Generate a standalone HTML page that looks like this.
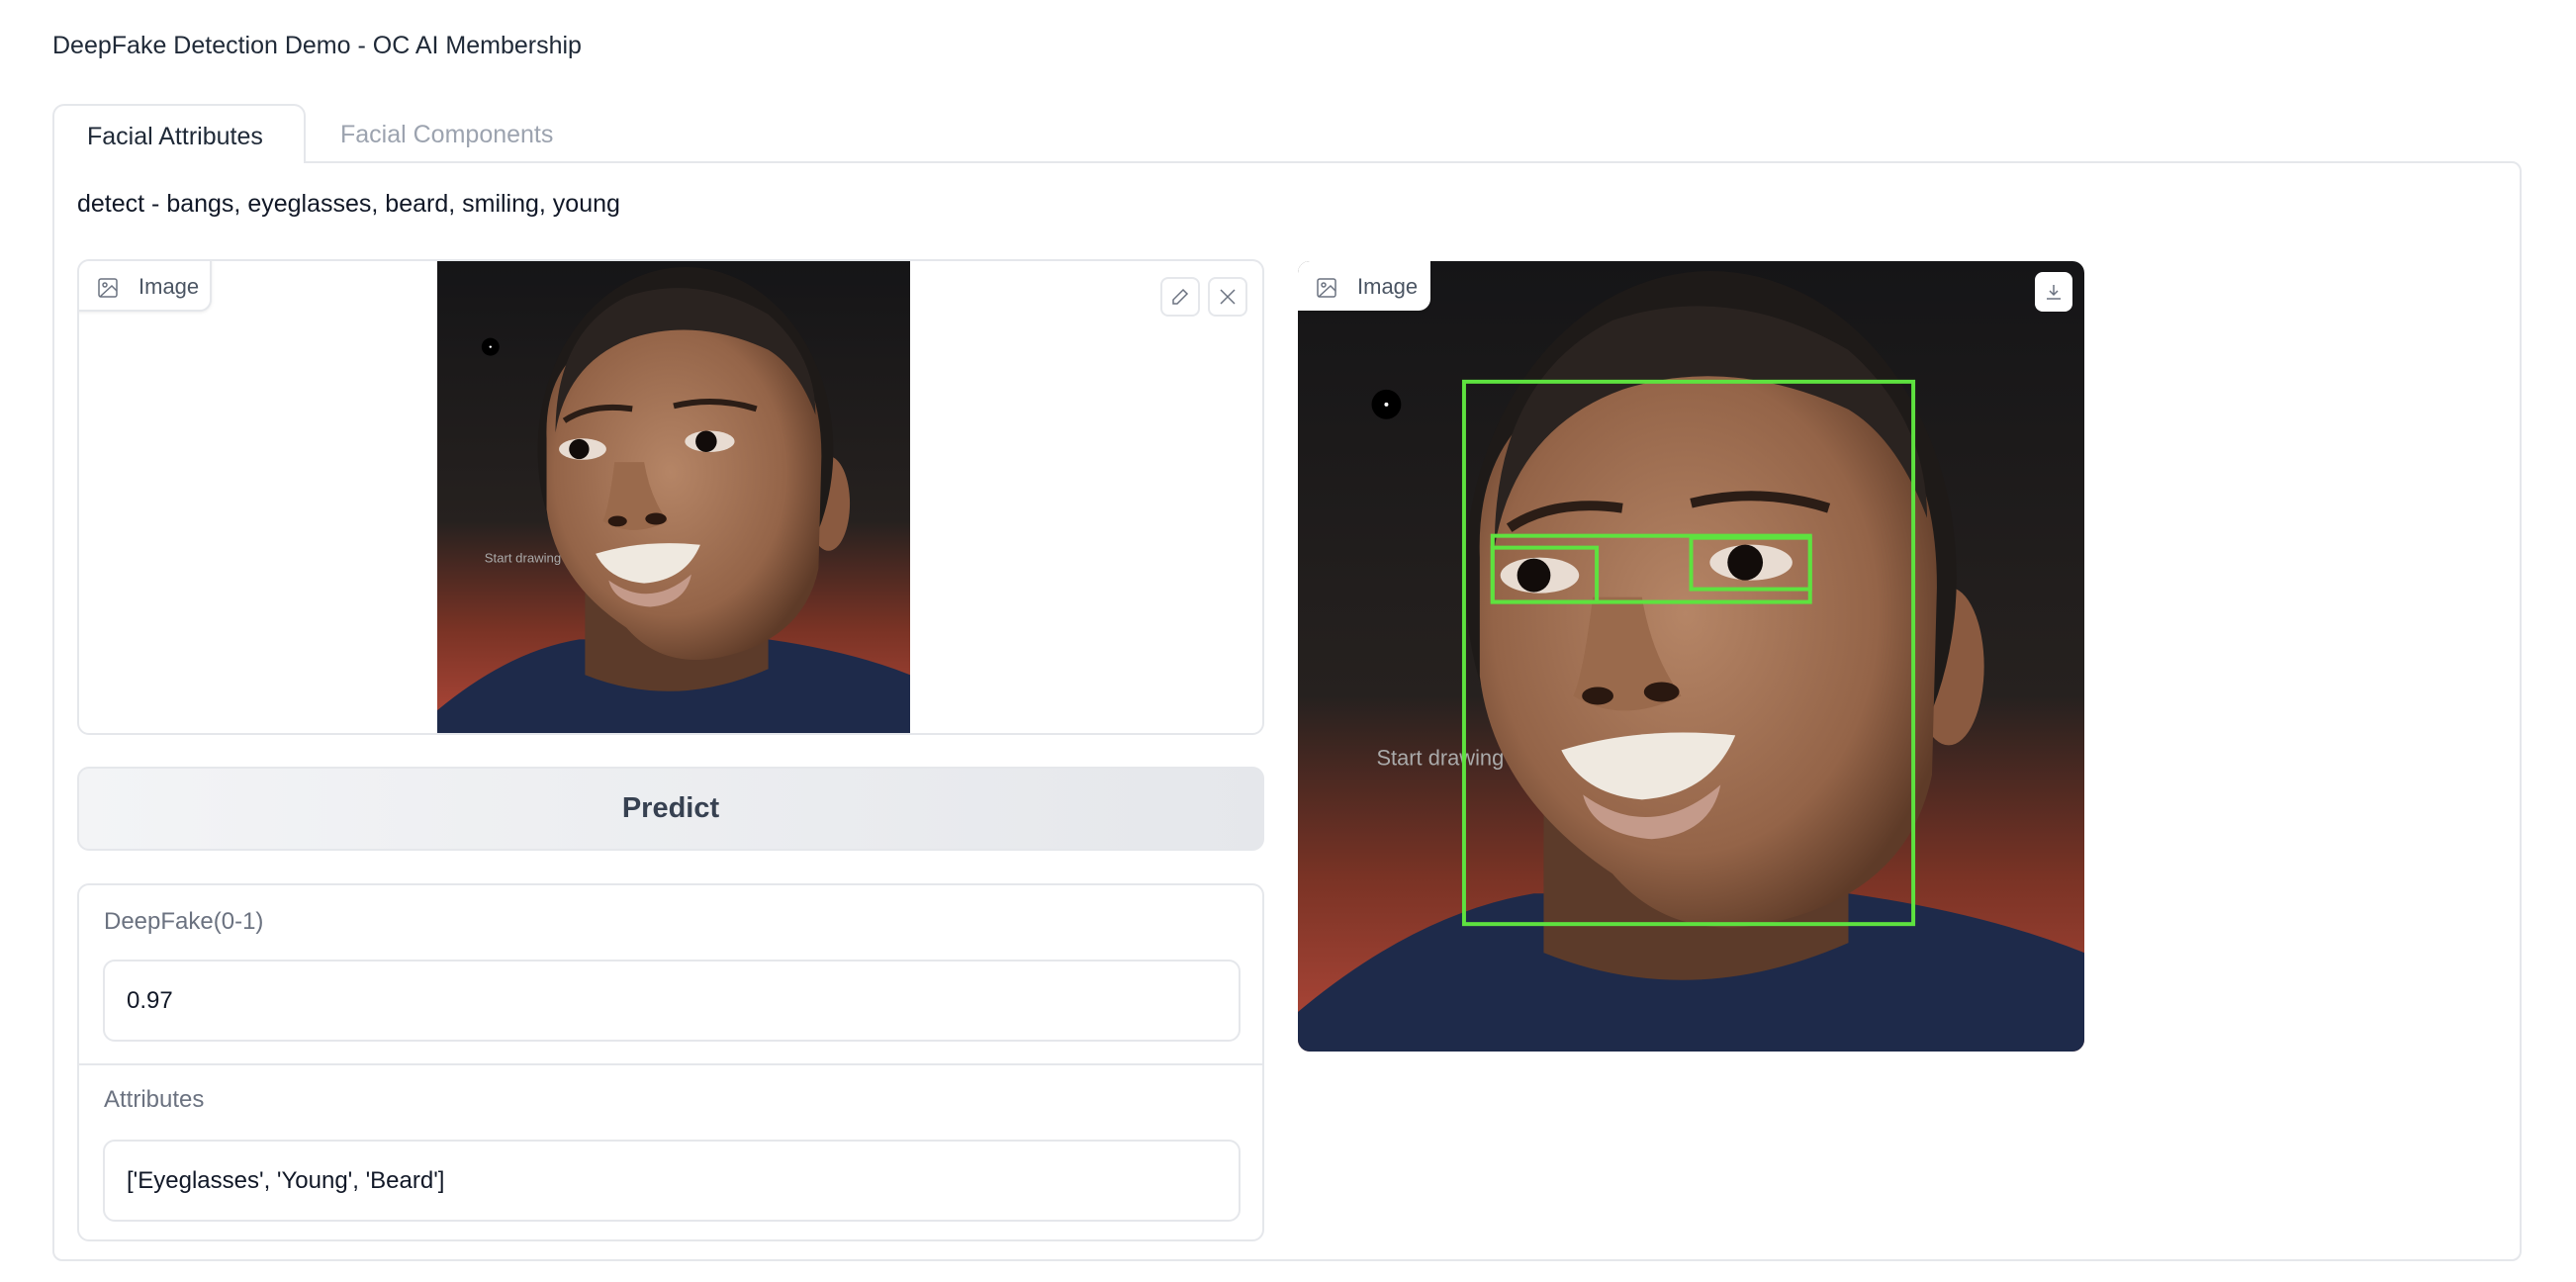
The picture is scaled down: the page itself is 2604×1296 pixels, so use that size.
<!DOCTYPE html>
<html><head><meta charset="utf-8"><style>
*{box-sizing:border-box;margin:0;padding:0}
body{width:2604px;height:1296px;background:#fff;font-family:"Liberation Sans",sans-serif;position:relative;overflow:hidden;color:#1f2937}
.a{position:absolute}
.title{left:53px;top:32px;font-size:25px;color:#1f2937}
.tab{left:53px;top:105px;width:256px;height:60px;border:2px solid #e5e7eb;border-bottom:none;border-radius:12px 12px 0 0;background:#fff;z-index:2;font-size:25px;padding:17px 0 0 33px;color:#1f2937}
.tab2{left:344px;top:122px;font-size:25px;color:#9ca3af}
.panel{left:53px;top:163px;width:2496px;height:1112px;border:2px solid #e5e7eb;border-radius:0 10px 10px 10px}
.detect{left:78px;top:192px;font-size:25px;color:#111827}
.box{border:2px solid #e5e7eb;border-radius:12px;background:#fff}
.lbl{background:#fff;border:2px solid #e5e7eb;border-top:none;border-left:none;border-radius:0 0 12px 0;font-size:22px;color:#4b5563;padding:13px 0 0 60px;box-shadow:0 1px 3px rgba(0,0,0,.08)}
.ic{position:absolute;left:18px;top:16px}
.btn{border:2px solid #e5e7eb;border-radius:8px;background:#fff;display:flex;align-items:center;justify-content:center}
.predict{left:78px;top:775px;width:1200px;height:85px;border-radius:12px;background:linear-gradient(90deg,#f3f4f6,#e5e7eb);border:2px solid #e5e7eb;font-size:29px;font-weight:bold;color:#374151;text-align:center;line-height:81px}
.flbl{font-size:24px;color:#6b7280}
.inp{border:2px solid #e5e7eb;border-radius:12px;background:#fff;font-size:24px;color:#111827;padding:0 0 0 22px;display:flex;align-items:center}
</style></head><body>
<div class="a title">DeepFake Detection Demo - OC AI Membership</div>
<div class="a tab">Facial Attributes</div>
<div class="a tab2">Facial Components</div>
<div class="a panel"></div>
<div class="a detect">detect - bangs, eyeglasses, beard, smiling, young</div>

<svg width="0" height="0" style="position:absolute"><defs>
<linearGradient id="bg" x1="0" y1="0" x2="0" y2="1"><stop offset="0" stop-color="#151517"/><stop offset=".55" stop-color="#26211f"/><stop offset=".78" stop-color="#7a3325"/><stop offset="1" stop-color="#b2483a"/></linearGradient>
<radialGradient id="sk" cx=".45" cy=".45" r=".6"><stop offset="0" stop-color="#b58566"/><stop offset=".7" stop-color="#946448"/><stop offset="1" stop-color="#5e3b28"/></radialGradient>
<g id="face">
<rect width="800" height="800" fill="url(#bg)"/>
<path d="M0 760 Q120 660 240 640 L560 640 Q700 660 800 700 L800 800 L0 800Z" fill="#1e2a4a"/>
<path d="M250 560 L250 700 Q400 760 560 690 L560 560Z" fill="#5c3b2a"/>
<ellipse cx="662" cy="410" rx="36" ry="80" fill="#8a5a40"/>
<ellipse cx="420" cy="320" rx="250" ry="310" fill="#1e1a18"/>
<path d="M185 300 Q180 160 300 120 Q420 70 560 130 Q650 180 650 330 L645 520 Q620 640 480 670 Q380 690 320 620 Q200 540 185 420Z" fill="url(#sk)"/>
<path d="M200 290 Q220 170 330 130 Q440 95 560 150 Q610 180 640 260 Q640 160 560 90 Q440 20 320 60 Q200 120 200 290Z" fill="#2a2320"/>
<path d="M215 270 Q260 240 330 250" stroke="#2b1d16" stroke-width="10" fill="none"/>
<path d="M400 245 Q470 228 540 250" stroke="#2b1d16" stroke-width="10" fill="none"/>
<ellipse cx="246" cy="318" rx="40" ry="18" fill="#e8dcd2"/><circle cx="240" cy="318" r="17" fill="#120c0a"/>
<ellipse cx="461" cy="305" rx="42" ry="18" fill="#e8dcd2"/><circle cx="455" cy="305" r="18" fill="#120c0a"/>
<path d="M300 340 Q290 420 280 440 Q330 470 390 440 Q360 400 350 340Z" fill="#9a6a4c"/>
<ellipse cx="305" cy="440" rx="16" ry="9" fill="#2a1810"/><ellipse cx="370" cy="436" rx="18" ry="10" fill="#2a1810"/>
<path d="M268 495 Q350 470 445 480 Q420 540 350 545 Q290 540 268 495Z" fill="#efe9e0"/>
<path d="M290 540 Q360 590 430 530 Q420 580 360 585 Q300 580 290 540Z" fill="#c49a8a"/>
<text x="80" y="510" font-size="22" fill="#aaa" font-family="Liberation Sans">Start drawing</text>
<circle cx="90" cy="145" r="15" fill="#000"/><circle cx="90" cy="145" r="2" fill="#fff"/>
</g></defs></svg>

<div class="a box" style="left:78px;top:262px;width:1200px;height:481px;overflow:hidden">
<svg class="a" style="left:362px;top:0" width="478" height="478" viewBox="0 0 800 800"><use href="#face"/></svg>
<div class="a lbl" style="left:-2px;top:-2px;width:136px;height:53px;border-left:2px solid #e5e7eb;border-top:2px solid #e5e7eb;border-radius:12px 0 12px 0"><svg class="ic" width="22" height="22" viewBox="0 0 22 22" fill="none" stroke="#6b7280" stroke-width="1.5"><rect x="2" y="2" width="18" height="18" rx="2"/><circle cx="8" cy="8" r="2"/><path d="M20 14l-5-5L3 20"/></svg>Image</div>
<div class="a btn" style="left:1093px;top:16px;width:40px;height:40px"><svg width="20" height="20" viewBox="0 0 20 20" fill="none" stroke="#6b7280" stroke-width="1.5"><path d="M13 3l4 4L7 17H3v-4z"/></svg></div>
<div class="a btn" style="left:1141px;top:16px;width:40px;height:40px"><svg width="18" height="18" viewBox="0 0 18 18" stroke="#6b7280" stroke-width="1.5"><path d="M2 2l14 14M16 2L2 16"/></svg></div>
</div>

<div class="a predict">Predict</div>

<div class="a box" style="left:78px;top:893px;width:1200px;height:362px"></div>
<div class="a flbl" style="left:105px;top:918px">DeepFake(0-1)</div>
<div class="a inp" style="left:104px;top:970px;width:1150px;height:83px">0.97</div>
<div class="a" style="left:80px;top:1075px;width:1196px;height:2px;background:#e5e7eb"></div>
<div class="a flbl" style="left:105px;top:1098px">Attributes</div>
<div class="a inp" style="left:104px;top:1152px;width:1150px;height:83px">['Eyeglasses', 'Young', 'Beard']</div>

<div class="a" style="left:1312px;top:264px;width:795px;height:799px;border-radius:12px;overflow:hidden">
<svg class="a" style="left:0;top:0" width="795" height="799" viewBox="0 0 800 800" preserveAspectRatio="none"><use href="#face"/>
<g fill="none" stroke="#5ee23f" stroke-width="4">
<rect x="169" y="122" width="457" height="549"/>
<rect x="198" y="278" width="323" height="67"/>
<rect x="198" y="290" width="106" height="55"/>
<rect x="400" y="280" width="121" height="52"/>
</g></svg>
<div class="a lbl" style="left:0;top:0;width:134px;height:50px;border:none;border-radius:0 0 12px 0"><svg class="ic" width="22" height="22" viewBox="0 0 22 22" fill="none" stroke="#6b7280" stroke-width="1.5"><rect x="2" y="2" width="18" height="18" rx="2"/><circle cx="8" cy="8" r="2"/><path d="M20 14l-5-5L3 20"/></svg>Image</div>
<div class="a btn" style="left:745px;top:11px;width:38px;height:40px;border:none"><svg width="20" height="20" viewBox="0 0 20 20" fill="none" stroke="#6b7280" stroke-width="1.5"><path d="M10 3v10M6 9l4 4 4-4M3 17h14"/></svg></div>
</div>
</body></html>
